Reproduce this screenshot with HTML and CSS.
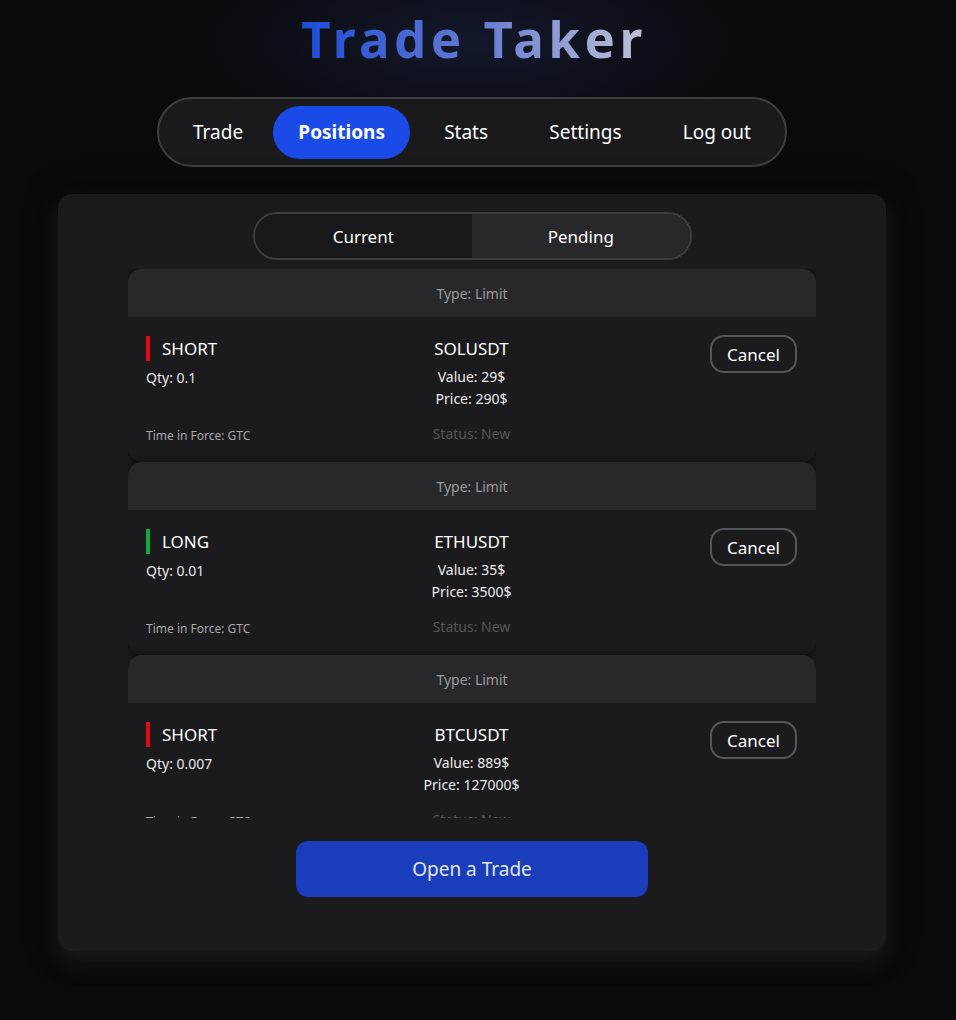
FILE: index.html
```html
<!DOCTYPE html>
<html lang="en">
<head>
<meta charset="utf-8">
<title>Trade Taker</title>
<link rel="stylesheet" href="styles.css">
</head>
<body>
<div class="page">
  <header class="brand">
    <h1 class="brand-title">Trade Taker</h1>
  </header>

  <nav class="nav">
    <a class="nav-item">Trade</a>
    <a class="nav-item active">Positions</a>
    <a class="nav-item">Stats</a>
    <a class="nav-item">Settings</a>
    <a class="nav-item">Log out</a>
  </nav>

  <main class="panel">
    <div class="tabs">
      <button class="tab">Current</button>
      <button class="tab active">Pending</button>
    </div>

    <div class="list">
      <article class="order">
        <div class="order-head">Type: Limit</div>
        <div class="order-body">
          <div class="col-left">
            <div class="side short">SHORT</div>
            <div class="qty">Qty: 0.1</div>
            <div class="tif">Time in Force: GTC</div>
          </div>
          <div class="col-mid">
            <div class="symbol">SOLUSDT</div>
            <div class="val val-first">Value: 29$</div>
            <div class="val">Price: 290$</div>
            <div class="status">Status: New</div>
          </div>
          <div class="col-right">
            <button class="cancel">Cancel</button>
          </div>
        </div>
      </article>

      <article class="order">
        <div class="order-head">Type: Limit</div>
        <div class="order-body">
          <div class="col-left">
            <div class="side long">LONG</div>
            <div class="qty">Qty: 0.01</div>
            <div class="tif">Time in Force: GTC</div>
          </div>
          <div class="col-mid">
            <div class="symbol">ETHUSDT</div>
            <div class="val val-first">Value: 35$</div>
            <div class="val">Price: 3500$</div>
            <div class="status">Status: New</div>
          </div>
          <div class="col-right">
            <button class="cancel">Cancel</button>
          </div>
        </div>
      </article>

      <article class="order">
        <div class="order-head">Type: Limit</div>
        <div class="order-body">
          <div class="col-left">
            <div class="side short">SHORT</div>
            <div class="qty">Qty: 0.007</div>
            <div class="tif">Time in Force: GTC</div>
          </div>
          <div class="col-mid">
            <div class="symbol">BTCUSDT</div>
            <div class="val val-first">Value: 889$</div>
            <div class="val">Price: 127000$</div>
            <div class="status">Status: New</div>
          </div>
          <div class="col-right">
            <button class="cancel">Cancel</button>
          </div>
        </div>
      </article>
    </div>

    <div class="actions">
      <button class="open-trade">Open a Trade</button>
    </div>
  </main>
</div>
</body>
</html>
```

FILE: styles.css
```css
* { box-sizing: border-box; }

html, body {
  margin: 0;
  padding: 0;
}

body {
  background-color: #0a0a0c;
  background-image: radial-gradient(ellipse 300px 110px at 472px 42px, rgba(28, 40, 80, 0.45), rgba(10, 10, 12, 0) 100%);
  background-repeat: no-repeat;
  color: #ffffff;
  font-family: "Noto Sans", "Open Sans", sans-serif;
  min-height: 1020px;
}

.page {
  width: 944px;
  display: flex;
  flex-direction: column;
  align-items: center;
  padding-top: 7px;
}

.brand-title {
  margin: 0;
  height: 65px;
  line-height: 62px;
  font-size: 51px;
  font-weight: 700;
  letter-spacing: 4.5px;
  padding-left: 4px;
  background: linear-gradient(90deg, #1c4ad8 0%, #6a7fd0 55%, #c2c2d6 100%);
  -webkit-background-clip: text;
  background-clip: text;
  color: transparent;
}

.nav {
  margin-top: 25px;
  width: 630px;
  height: 70px;
  border: 2px solid #3d3d42;
  border-radius: 35px;
  background: #1a1a1c;
  display: flex;
  align-items: center;
  justify-content: space-between;
  padding: 0 7px;
}

.nav-item {
  height: 53px;
  padding: 0 27px;
  border-radius: 27px;
  display: flex;
  align-items: center;
  font-size: 19px;
  color: #ffffff;
}

.nav-item.active {
  background: #1a4be6;
  font-weight: 700;
  padding: 0 25px;
  margin-left: -4px;
}

.panel {
  margin-top: 27px;
  width: 828px;
  background: #1b1b1d;
  border-radius: 14px;
  padding: 18px 70px 54px;
  display: flex;
  flex-direction: column;
  align-items: center;
  box-shadow: 0 10px 22px rgba(70, 70, 78, 0.35), 0 0 30px rgba(0, 0, 0, 0.6);
}

.tabs {
  width: 439px;
  height: 48px;
  border: 2px solid #3d3d42;
  border-radius: 24px;
  overflow: hidden;
  display: flex;
}

.tab {
  flex: 1;
  border: 0;
  margin: 0;
  font-family: inherit;
  font-size: 17px;
  color: #ffffff;
  background: #19191b;
}

.tab.active {
  background: #28282b;
}

.list {
  margin-top: 9px;
  width: 688px;
  height: 549px;
  overflow-y: auto;
  scrollbar-width: none;
  display: flex;
  flex-direction: column;
}

.order {
  flex: none;
  border-radius: 14px;
  overflow: hidden;
  background: #1b1b1d;
  box-shadow: 0 0 8px rgba(0, 0, 0, 0.55);
}

.order-head {
  height: 48px;
  background: #28282b;
  display: flex;
  align-items: center;
  justify-content: center;
  font-size: 14px;
  color: #9a9a9e;
}

.order-body {
  display: grid;
  grid-template-columns: 1fr auto 1fr;
  padding: 18px 19px 17px 18px;
}

.col-left {
  display: flex;
  flex-direction: column;
  align-items: flex-start;
}

.side {
  height: 25px;
  border-left: 4px solid #e00814;
  padding-left: 12px;
  display: flex;
  align-items: center;
  font-size: 17px;
  line-height: 25px;
  margin-top: 1px;
}

.side.long {
  border-left-color: #10a840;
}

.qty {
  margin-top: 6px;
  font-size: 14px;
  line-height: 22px;
  color: #e8e8ea;
}

.tif {
  margin-top: auto;
  margin-bottom: 0;
  font-size: 12px;
  line-height: 18px;
  color: #a8a8ac;
}

.col-mid {
  display: flex;
  flex-direction: column;
  align-items: center;
  padding-top: 2px;
}

.symbol {
  font-size: 17px;
  line-height: 24px;
}

.val {
  font-size: 14px;
  line-height: 22px;
  color: #ececee;
}

.val-first {
  margin-top: 5px;
}

.status {
  margin-top: 13px;
  font-size: 14px;
  line-height: 22px;
  color: #55555a;
}

.col-right {
  display: flex;
  justify-content: flex-end;
  align-items: flex-start;
}

.cancel {
  width: 87px;
  height: 38px;
  border: 2px solid #55555c;
  border-radius: 14px;
  background: transparent;
  color: #ffffff;
  font-family: inherit;
  font-size: 17px;
  padding: 0;
}

.actions {
  margin-top: 23px;
  display: flex;
  justify-content: center;
}

.open-trade {
  width: 352px;
  height: 56px;
  border: 0;
  border-radius: 12px;
  background: #1a3dbb;
  color: #e2e7f7;
  font-family: inherit;
  font-size: 19px;
}
```
